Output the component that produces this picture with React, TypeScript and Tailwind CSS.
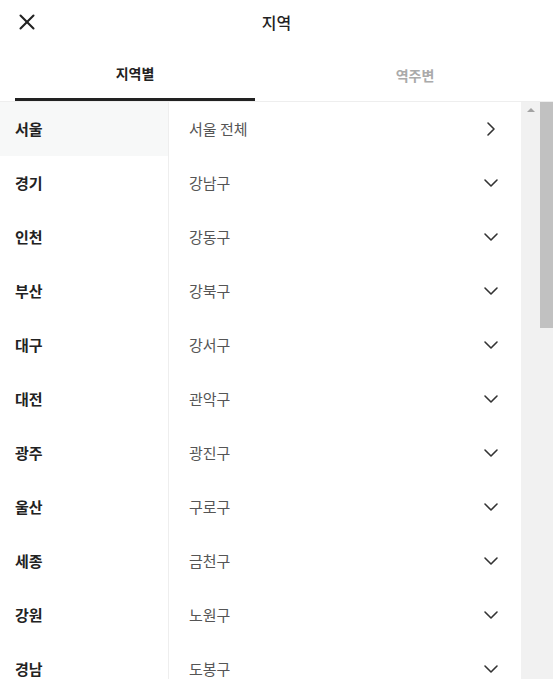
import { X, ChevronDown, ChevronRight } from 'lucide-react';

const cities = ['서울', '경기', '인천', '부산', '대구', '대전', '광주', '울산', '세종', '강원', '경남'];
const districts = ['서울 전체', '강남구', '강동구', '강북구', '강서구', '관악구', '광진구', '구로구', '금천구', '노원구', '도봉구'];

export default function App() {
  return (
    <div
      className="h-[679px] w-[553px] overflow-hidden bg-white flex flex-col"
      style={{ fontFamily: '"Noto Sans CJK KR", "Noto Sans", sans-serif' }}
    >
      {/* 헤더 */}
      <div className="h-[43px] flex items-center shrink-0">
        <div className="w-[54px] flex items-center justify-center">
          <X size={26} strokeWidth={1.9} className="text-[#222]" />
        </div>
        <h1 className="flex-1 text-center text-[16px] font-medium text-[#222]">지역</h1>
        <div className="w-[54px]" />
      </div>

      {/* 탭 */}
      <div className="h-[59px] flex border-b border-[#eeeeee] shrink-0">
        <button className="ml-[15px] w-[240px] pt-[6px] flex items-center justify-center border-b-[3px] border-[#222] text-[14px] font-bold text-[#222]">
          지역별
        </button>
        <button className="flex-1 pt-[6px] pl-[22px] flex items-center justify-center text-[14px] font-semibold text-[#aaaaaa]">
          역주변
        </button>
      </div>

      {/* 목록 */}
      <div className="flex flex-1 min-h-0">
        <ul className="w-[169px] border-r border-[#eeeeee] shrink-0">
          {cities.map((c, i) => (
            <li
              key={c}
              className={`h-[54px] flex items-center pl-[15px] text-[15px] font-semibold text-[#222] ${i === 0 ? 'bg-[#f7f8f8]' : ''}`}
            >
              {c}
            </li>
          ))}
        </ul>
        <ul className="flex-1">
          {districts.map((d, i) => (
            <li key={d} className="h-[54px] flex items-center justify-between pl-[20px] pr-[18px] text-[15px] text-[#555]">
              <span>{d}</span>
              {i === 0 ? (
                <ChevronRight size={24} strokeWidth={1.6} className="text-[#333]" />
              ) : (
                <ChevronDown size={24} strokeWidth={1.6} className="text-[#333]" />
              )}
            </li>
          ))}
        </ul>
        {/* 스크롤바 */}
        <div className="w-[32px] bg-[#f1f1f1] flex shrink-0">
          <div className="w-[19px] flex justify-center pt-[6px]">
            <div className="w-0 h-0 border-l-[4px] border-r-[4px] border-b-[4px] border-l-transparent border-r-transparent border-b-[#a3a3a3]" />
          </div>
          <div className="w-[13px]">
            <div className="h-[226px] bg-[#c1c1c1]" />
          </div>
        </div>
      </div>
    </div>
  );
}
